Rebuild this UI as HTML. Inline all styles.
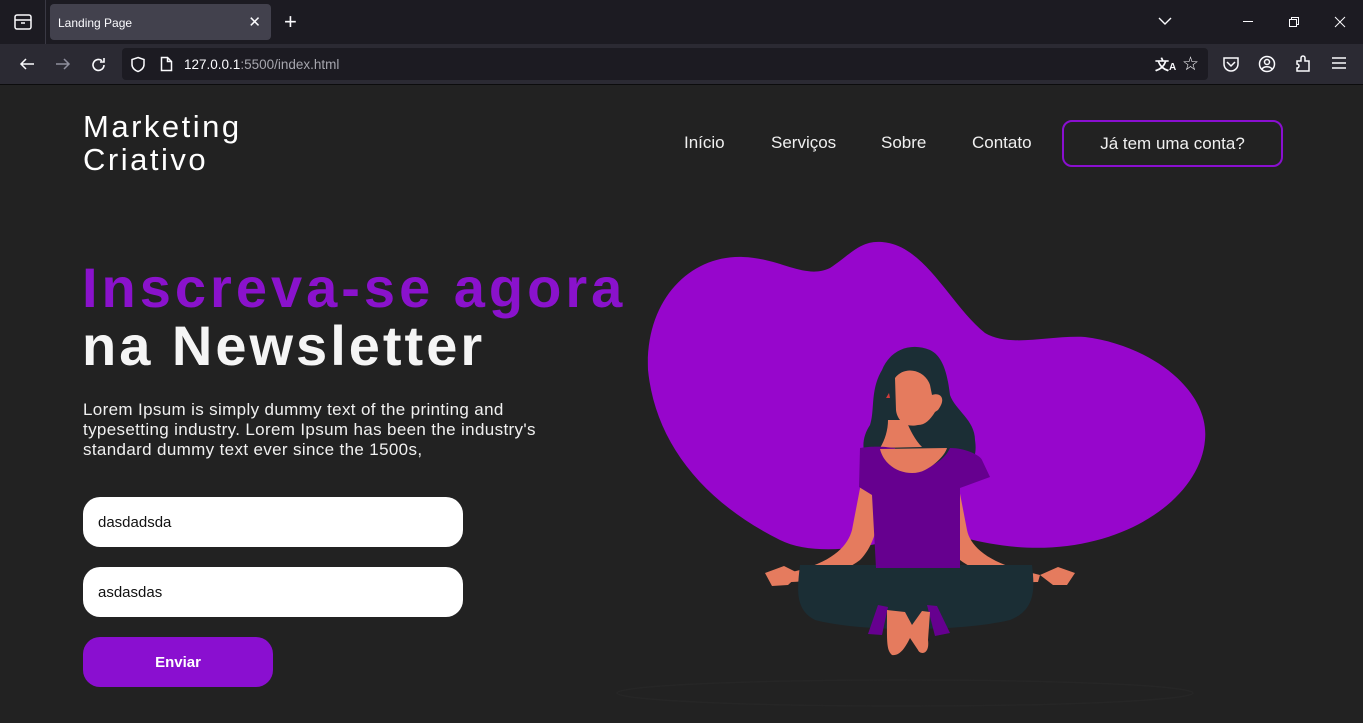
<!DOCTYPE html>
<html><head><meta charset="utf-8"><style>
*{margin:0;padding:0;box-sizing:border-box}
body{width:1363px;height:723px;overflow:hidden;background:#222;font-family:"Liberation Sans",sans-serif;position:relative}
.abs{position:absolute}
.tabbar{left:0;top:0;width:1363px;height:44px;background:#1c1b22}
.toolbar{left:0;top:44px;width:1363px;height:41px;background:#2b2a33;border-bottom:1px solid #0c0c0d}
.tab{left:50px;top:4px;width:221px;height:36px;background:#42414d;border-radius:4px;color:#fbfbfe;font-size:12px;padding:12px 8px}
.url{left:122px;top:48px;width:1086px;height:32px;background:#1c1b22;border-radius:4px;color:#fbfbfe;font-size:13.5px;padding:9px 62px}
.w{color:#fff}
.nav{top:133px;color:#f0f0f0;font-size:17px}
.btn{left:1062px;top:120px;width:221px;height:47px;border:2px solid #8a0fd0;border-radius:10px;color:#f0f0f0;font-size:17px;text-align:center;line-height:43px}
.field{left:83px;width:380px;height:50px;background:#fff;border-radius:17px;font-size:15px;padding:17px 15px;color:#111}
</style></head><body>
<div class="abs tabbar"></div>
<svg class="abs" style="left:13px;top:13px" width="20" height="18" viewBox="0 0 20 18" fill="none" stroke="#fbfbfe" stroke-width="1.5"><rect x="2" y="2" width="16" height="14" rx="2"/><path d="M2 7h16M8 10h4"/></svg>
<div class="abs" style="left:45px;top:0;width:1px;height:44px;background:#3a3944"></div>
<div class="abs tab">Landing Page<span style="position:absolute;right:10px;top:9px;font-size:15px">✕</span></div>
<div class="abs" style="left:284px;top:9px;color:#fbfbfe;font-size:22px;font-weight:300">+</div>
<svg class="abs" style="left:1157px;top:15px" width="16" height="12"><path d="M2 3l6 6 6-6" stroke="#fbfbfe" fill="none" stroke-width="1.4"/></svg>
<div class="abs" style="left:1243px;top:21px;width:10px;height:1px;background:#fbfbfe"></div>
<svg class="abs" style="left:1288px;top:16px" width="12" height="12" fill="none" stroke="#fbfbfe"><rect x="1.5" y="3.5" width="7" height="7"/><path d="M3.5 3.5V1.5h7v7h-2"/></svg>
<svg class="abs" style="left:1334px;top:16px" width="12" height="12" stroke="#fbfbfe"><path d="M1 1l10 10M11 1L1 11"/></svg>
<div class="abs toolbar"></div>
<svg class="abs" style="left:18px;top:56px" width="18" height="16" fill="none" stroke="#fbfbfe" stroke-width="1.5"><path d="M16 8H3M8 3L3 8l5 5"/></svg>
<svg class="abs" style="left:54px;top:56px" width="18" height="16" fill="none" stroke="#8f8f9d" stroke-width="1.5"><path d="M2 8h13M10 3l5 5-5 5"/></svg>
<svg class="abs" style="left:90px;top:56px" width="18" height="18" fill="none" stroke="#fbfbfe" stroke-width="1.6"><path d="M14 9a5.5 5.5 0 1 1-2-4.3M14 2v4h-4"/></svg>
<div class="abs url"><span>127.0.0.1</span><span style="color:#a6a6ae">:5500/index.html</span></div>
<svg class="abs" style="left:130px;top:56px" width="16" height="17" fill="none" stroke="#fbfbfe" stroke-width="1.5"><path d="M8 1.5l6 2v5c0 3.5-3 6-6 7-3-1-6-3.5-6-7v-5z"/></svg>
<svg class="abs" style="left:160px;top:56px" width="13" height="16" fill="none" stroke="#fbfbfe" stroke-width="1.5"><path d="M1.5 1.5h6l4 4v9h-10zM7.5 1.5v4h4"/></svg>
<div class="abs" style="left:1155px;top:55px;color:#fbfbfe;font-size:14px;font-weight:bold">文<span style="font-size:10px">A</span></div>
<div class="abs" style="left:1182px;top:53px;color:#fbfbfe;font-size:19px">☆</div>
<svg class="abs" style="left:1222px;top:56px" width="18" height="16" fill="none" stroke="#fbfbfe" stroke-width="1.5"><path d="M2 2h14v6a7 7 0 0 1-14 0z M5 6l4 4 4-4"/></svg>
<svg class="abs" style="left:1258px;top:55px" width="18" height="18" fill="none" stroke="#fbfbfe" stroke-width="1.5"><circle cx="9" cy="9" r="7.5"/><circle cx="9" cy="7" r="2.5"/><path d="M4 14c2-3 8-3 10 0"/></svg>
<svg class="abs" style="left:1295px;top:55px" width="16" height="18" fill="none" stroke="#fbfbfe" stroke-width="1.5"><path d="M2 6h4V3a2 2 0 0 1 4 0v3h4v10H2v-3a2 2 0 0 0 0-4z"/></svg>
<svg class="abs" style="left:1332px;top:57px" width="14" height="12" stroke="#fbfbfe" stroke-width="1.5"><path d="M0 1h14M0 6h14M0 11h14"/></svg>

<div class="abs w" style="left:83px;top:110px;font-size:31px;line-height:33px;letter-spacing:2.5px">Marketing<br>Criativo</div>
<div class="abs nav" style="left:684px">Início</div>
<div class="abs nav" style="left:771px">Serviços</div>
<div class="abs nav" style="left:881px">Sobre</div>
<div class="abs nav" style="left:972px">Contato</div>
<div class="abs btn">Já tem uma conta?</div>

<div class="abs" style="left:82px;top:258px;font-size:56px;line-height:60px;color:#8a12cc;letter-spacing:4px;font-weight:bold;white-space:nowrap">Inscreva-se agora</div>
<div class="abs" style="left:82px;top:316px;font-size:56px;line-height:60px;color:#f5f5f5;font-weight:bold;letter-spacing:3px;white-space:nowrap">na Newsletter</div>
<div class="abs" style="left:83px;top:400px;font-size:17px;line-height:20px;color:#f0f0f0;letter-spacing:0.35px;white-space:nowrap">Lorem Ipsum is simply dummy text of the printing and<br>typesetting industry. Lorem Ipsum has been the industry's<br>standard dummy text ever since the 1500s,</div>

<div class="abs field" style="top:497px">dasdadsda</div>
<div class="abs field" style="top:567px">asdasdas</div>
<div class="abs" style="left:83px;top:637px;width:190px;height:50px;background:#8a0fd0;border-radius:17px;color:#fff;font-weight:bold;font-size:15px;text-align:center;line-height:52px">Enviar</div>

<svg class="abs" style="left:0;top:0" width="1363" height="723">
<ellipse cx="905" cy="693" rx="288" ry="13" fill="none" stroke="#262626" stroke-width="1.5"/>
<path d="M648 370 C645 300 690 255 743 257 C780 258 805 280 830 268 C850 255 860 240 882 242 C925 245 950 305 985 333 C1010 348 1050 335 1085 337 C1150 345 1210 390 1205 440 C1200 500 1120 555 1017 547 C960 542 945 525 900 538 C860 550 810 555 780 540 C700 500 655 440 648 370 Z" fill="#9706cc"/>
<path d="M882 370 C890 350 910 342 930 350 C945 357 948 380 950 395 C955 410 975 420 975 440 C978 460 970 470 950 470 L880 470 C860 460 860 440 870 425 C875 410 870 390 882 370 Z" fill="#1b2e35"/>
<path d="M895 378 C905 365 925 370 930 385 L932 395 C940 392 947 398 938 410 L935 412 C930 420 925 425 918 425 C905 428 897 420 896 410 Z" fill="#e57b5e"/>
<path d="M889 393 l-3 5 4 0z" fill="#d13b3b"/>
<path d="M888 420 L906 420 C910 430 915 440 922 447 L880 448 C885 440 888 430 888 420Z" fill="#e57b5e"/>
<path d="M862 478 L852 530 C848 545 835 560 800 570 L780 575 L782 582 C810 583 840 575 860 560 C875 545 880 520 882 490Z" fill="#e57b5e"/>
<path d="M957 478 L967 530 C970 545 985 560 1020 570 L1040 575 L1038 582 C1010 583 980 575 960 560 C945 545 938 520 935 490Z" fill="#e57b5e"/>
<path d="M765 573 L784 566 L800 574 L788 585 L772 586Z M1075 573 L1058 567 L1040 575 L1053 585 L1067 585Z" fill="#e57b5e"/>
<path d="M800 565 L1032 565 C1035 590 1035 610 1010 620 C960 632 860 632 815 620 C795 610 797 590 800 565Z" fill="#1b2e35"/>
<path d="M860 448 C880 445 890 448 895 448 C905 478 940 470 950 448 C965 448 980 455 982 460 L990 477 L960 488 L960 568 L876 568 L872 495 L859 487 Z" fill="#66008f"/>
<path d="M880 449 C885 470 910 478 925 470 C935 465 945 455 947 448 Z" fill="#e57b5e"/>
<path d="M878 605 L888 607 L882 635 L868 634Z M927 605 L937 606 L950 633 L935 636Z" fill="#66008f"/>
<path d="M887 610 L905 612 L912 625 L922 611 L930 612 L928 640 C930 655 920 655 918 650 L910 638 C905 648 900 656 892 655 C886 650 887 640 887 610Z" fill="#e57b5e"/>
</svg>
</body></html>
